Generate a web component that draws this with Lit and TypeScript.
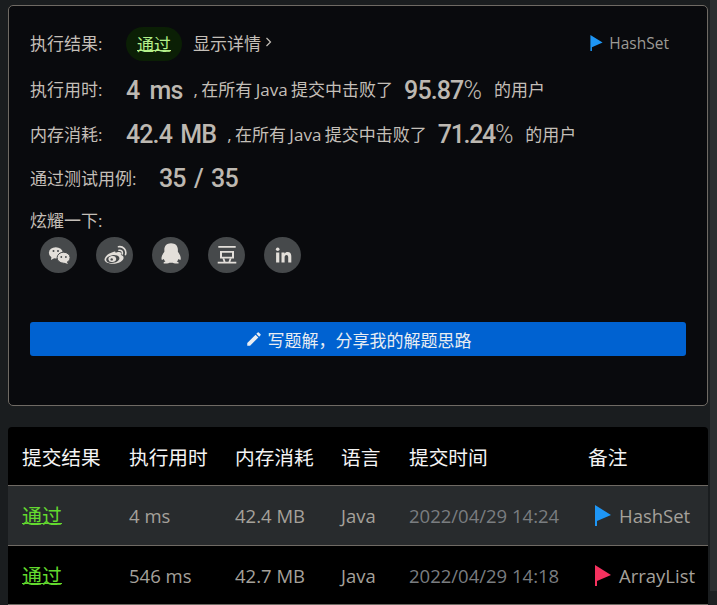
import { LitElement, html, css, svg } from "lit";
import { customElement } from "lit/decorators.js";

const flag = (color: string, cls: string) => html`<svg class=${cls} viewBox="0 0 16 21"><path fill=${color} d="M0 0 16 10 2 16V21H0z"/></svg>`;

const D = "#46494b";
const wechat = svg`<ellipse cx="8.800" cy="9.800" rx="6.900" ry="5.600"/><path d="M4.500 13.500 4 17l3.500-2z"/>
  <ellipse cx="16.600" cy="14.700" rx="6.500" ry="5.500" stroke=${D} stroke-width="1"/><path d="M19.500 18.500 21 21l-4.500-1.500z"/>
  <circle cx="6.500" cy="8" r="1" fill=${D}/><circle cx="11" cy="8" r="1" fill=${D}/><circle cx="14.300" cy="14" r=".9" fill=${D}/><circle cx="18.900" cy="14" r=".9" fill=${D}/>`;
const weibo = svg`<path d="M9.500 9.300c-4.400 1.300-8 4.500-8 7.300 0 2.800 4 4.200 8.500 4.200 5.500 0 10.600-2.700 10.600-6 0-1.700-1.500-2.300-2.800-2.700.7-1.500.3-2.800-1.600-3-1.200-.1-2.700.4-3.700.9.500-1.600-.6-1.900-3-.7z"/>
  <ellipse cx="9.800" cy="16" rx="6.700" ry="3.900" transform="rotate(-8 9.800 16)" fill=${D}/>
  <ellipse cx="9.300" cy="16" rx="3.900" ry="3" transform="rotate(-12 9.300 16)"/>
  <circle cx="8.700" cy="16.400" r="1.200" fill=${D}/>
  <path fill="none" stroke="currentColor" stroke-width="1.600" stroke-linecap="round" d="M15.500 3.800c4.500-.8 8.400 3 7 7.800M16 7.300c2.300-.5 4 1.400 3.200 3.600"/>`;
const qq = svg`<g transform="translate(12 10.800) scale(1.230 1.100) translate(-12 -12.400)"><path d="M12 2.800c-3.500 0-5.400 2.600-5.400 5.800v1.900c-1.300 1.900-2.500 4.500-2.300 6.600.1 1 .6 1.200 1.800.1.300.9.800 1.700 1.400 2.300-1 .3-1.800.9-1.500 1.400.3.400 2.400.5 3.900 0 .5-.2 1.200-.3 2.200-.3s1.700.1 2.200.3c1.500.5 3.600.4 3.900 0 .3-.5-.5-1.100-1.500-1.400.6-.6 1.100-1.400 1.400-2.300 1.200 1.100 1.700.9 1.800-.1.2-2.100-1-4.700-2.300-6.600V8.600c0-3.200-1.900-5.800-5.600-5.800z"/></g>`;
const douban = svg`<path fill-rule="evenodd" d="M3.300 3h17.400v1.800H3.300zM5 8h14v7.500H5zm2 1.800v3.900h10V9.800zM7.500 15.500l1.800-.3 1.200 3.600H8.600zM16.500 15.500l-1.800-.3-1.200 3.600h1.900zM2.700 18.800h18.600v1.800H2.700z"/>`;
const linkedin = svg`<circle cx="6.700" cy="6.300" r="1.800"/><path d="M5.100 9.400h3.200v10H5.100zM10.500 9.400h3v1.400c.6-1 1.700-1.700 3.100-1.700 2.700 0 3.700 1.700 3.700 4.500v5.800h-3.100v-5.200c0-1.300-.4-2.300-1.700-2.300s-1.900 1-1.900 2.300v5.200h-3.100z"/>`;

@customElement("app-root")
export class AppRoot extends LitElement {
  static styles = css`
    :host {
      display: block;
      width: 717px;
      height: 605px;
      overflow: hidden;
      background: #1a1d1f;
      font-family: "Open Sans", "Noto Sans CJK SC", sans-serif;
      position: relative;
    }
    .page { width: 700px; margin-left: 8px; padding-top: 5px; }
    .track { position: absolute; right: 0; top: 0; bottom: 0; width: 7px; background: #1e2123; }
    .thumb { height: 591px; background: #2c2f31; }
    .card {
      box-sizing: border-box;
      height: 401px;
      background: #090a0d;
      border: 1px solid #6f6a64;
      border-radius: 5px;
      padding: 0 21px;
      color: #c4bfb8;
      font-size: 17px;
      display: flex;
      flex-direction: column;
    }
    .line { display: flex; align-items: center; white-space: nowrap; }
    .l1 { height: 38px; margin-top: 17px; }
    .l2 { height: 38px; margin-top: 8px; }
    .l3 { height: 38px; margin-top: 7px; }
    .l4 { height: 38px; margin-top: 6px; }
    .label { width: 96px; flex: none; }
    .l4 .label { width: 129px; }
    .pill {
      width: 56px; height: 34px; border-radius: 17px; background: #0b1f05;
      display: flex; align-items: center; justify-content: center;
      margin-top: 4px; padding-bottom: 2px; box-sizing: border-box;
      color: #b4f08a;
    }
    .pill span, .ok { text-decoration: underline; text-decoration-thickness: 1px; text-underline-offset: -1px; }
    .detail { margin-left: 11px; }
    .chev { width: 7px; height: 10px; margin-left: 4px; }
    .spacer { flex: 1; }
    .tag { display: flex; align-items: center; margin: 2px 17px 0 0; color: #9d9a95; font-size: 15.500px; }
    .tagflag { width: 13px; height: 16px; margin: 0 6px 0 -2px; }
    .big {
      font-family: "Roboto", sans-serif;
      font-weight: 500;
      font-size: 25px;
      color: #bdb8b1;
      letter-spacing: -0.9px;
      word-spacing: 3px;
      padding-top: 2px;
    }
    .l2 .big { padding-top: 4px; }
    .l3 .pct { letter-spacing: -1.300px; }
    .big i { font-style: normal; font-weight: 300; }
    .ms { margin-right: 11px; }
    .l2 .ms { word-spacing: 5px; }
    .sent { word-spacing: -1px; }
    .pct { margin: 0 13px 0 11px; }
    .frac { word-spacing: 3px; }
    .share { margin-top: 12px; height: 22px; display: flex; align-items: center; }
    .icons { display: flex; gap: 19px; padding-left: 10px; margin-top: 7px; }
    .ic {
      width: 37px; height: 36px; border-radius: 50%; background: #46494b;
      display: flex; align-items: center; justify-content: center; color: #e3dfda;
    }
    .ic svg { width: 24px; height: 24px; fill: currentColor; }
    .write {
      margin-top: 49px;
      height: 34px;
      border-radius: 3px;
      background: #0062d1;
      color: #e9edf2;
      font-size: 17px;
      display: flex; align-items: center; justify-content: center;
      gap: 5px;
    }
    .write svg { width: 18px; height: 18px; fill: #e9edf2; }
    .table {
      margin-top: 21px;
      background: #000;
      border-radius: 4px 4px 0 0;
      color: #a5a19b;
      font-size: 18.500px;
    }
    .row {
      display: grid;
      grid-template-columns: 107px 106px 106px 68px 179px 1fr;
      padding-left: 14px;
      align-items: center;
      height: 60px;
      box-sizing: border-box;
      border-bottom: 1px solid #6f6a64;
      white-space: nowrap;
    }
    .head { height: 59px; color: #f4f4f4; font-size: 19.700px; }
    .row:last-child { height: 59px; }
    .alt { background: #282b2d; }
    .ok { color: #63d92f; font-size: 20px; }
    .time { color: #7a7d80; }
    .note { display: flex; align-items: center; padding-left: 7px; color: #a5a19b; }
    .noteflag { width: 16px; height: 21px; margin-right: 8px; }
  `;

  private row(ms: string, mem: string, time: string, color: string, note: string, alt: boolean) {
    return html`<div class="row ${alt ? "alt" : ""}">
      <span class="ok">通过</span><span>${ms}</span><span>${mem}</span><span>Java</span>
      <span class="time">${time}</span>
      <span class="note">${flag(color, "noteflag")}${note}</span>
    </div>`;
  }

  render() {
    return html`<div class="page">
      <section class="card">
        <div class="line l1">
          <span class="label">执行结果:</span>
          <div class="pill"><span>通过</span></div>
          <span class="detail">显示详情</span>
          <svg class="chev" viewBox="0 0 7 10"><path d="M1.500 1 5.500 5 1.500 9" fill="none" stroke="#c4bfb8" stroke-width="1.200"/></svg>
          <span class="spacer"></span>
          <span class="tag">${flag("#1e96f5", "tagflag")}HashSet</span>
        </div>
        <div class="line l2">
          <span class="label">执行用时:</span>
          <span class="big ms">4 ms</span>
          <span class="sent">, 在所有 Java 提交中击败了</span>
          <span class="big pct">95.87<i>%</i></span>
          <span>的用户</span>
        </div>
        <div class="line l3">
          <span class="label">内存消耗:</span>
          <span class="big ms">42.4 MB</span>
          <span class="sent">, 在所有 Java 提交中击败了</span>
          <span class="big pct">71.24<i>%</i></span>
          <span>的用户</span>
        </div>
        <div class="line l4">
          <span class="label">通过测试用例:</span>
          <span class="big frac">35 / 35</span>
        </div>
        <div class="share">炫耀一下:</div>
        <div class="icons">
          ${[wechat, weibo, qq, douban, linkedin].map(
            (i) => html`<span class="ic"><svg viewBox="0 0 24 24">${i}</svg></span>`
          )}
        </div>
        <div class="write">
          <svg viewBox="0 0 24 24"><path d="M3 17.250V21h3.750L17.810 9.940l-3.750-3.750L3 17.250zM20.710 7.040a1 1 0 0 0 0-1.410l-2.340-2.340a1 1 0 0 0-1.410 0l-1.830 1.830 3.750 3.750 1.830-1.830z"/></svg>
          写题解，分享我的解题思路
        </div>
      </section>
      <section class="table">
        <div class="row head">
          <span>提交结果</span><span>执行用时</span><span>内存消耗</span><span>语言</span><span>提交时间</span>
          <span>备注</span>
        </div>
        ${this.row("4 ms", "42.4 MB", "2022/04/29 14:24", "#1e96f5", "HashSet", true)}
        ${this.row("546 ms", "42.7 MB", "2022/04/29 14:18", "#f5325f", "ArrayList", false)}
      </section>
    </div>
    <div class="track"><div class="thumb"></div></div>`;
  }
}
